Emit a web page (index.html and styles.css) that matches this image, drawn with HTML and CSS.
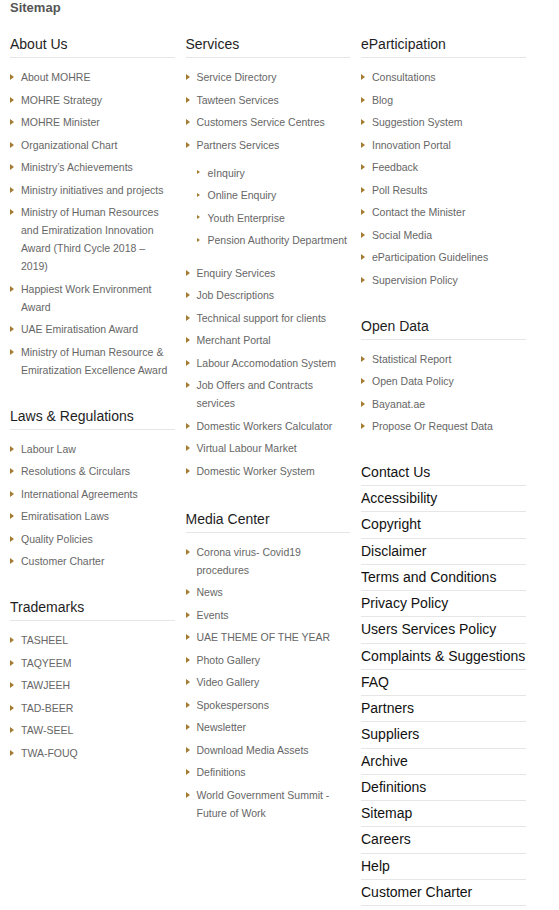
FILE: index.html
```html
<!DOCTYPE html>
<html lang="en">
<head>
<meta charset="utf-8">
<title>Sitemap</title>
<link rel="stylesheet" href="styles.css">
</head>
<body>
<h1 class="page-title">Sitemap</h1>
<div class="sitemap">
  <div class="col">
    <section class="section">
      <h2 class="section-title">About Us</h2>
      <ul class="links">
        <li><a href="#">About MOHRE</a></li>
        <li><a href="#">MOHRE Strategy</a></li>
        <li><a href="#">MOHRE Minister</a></li>
        <li><a href="#">Organizational Chart</a></li>
        <li><a href="#">Ministry’s Achievements</a></li>
        <li><a href="#">Ministry initiatives and projects</a></li>
        <li><a href="#">Ministry of Human Resources and Emiratization Innovation Award (Third Cycle 2018 – 2019)</a></li>
        <li><a href="#">Happiest Work Environment Award</a></li>
        <li><a href="#">UAE Emiratisation Award</a></li>
        <li><a href="#">Ministry of Human Resource &amp; Emiratization Excellence Award</a></li>
      </ul>
    </section>
    <section class="section">
      <h2 class="section-title">Laws &amp; Regulations</h2>
      <ul class="links">
        <li><a href="#">Labour Law</a></li>
        <li><a href="#">Resolutions &amp; Circulars</a></li>
        <li><a href="#">International Agreements</a></li>
        <li><a href="#">Emiratisation Laws</a></li>
        <li><a href="#">Quality Policies</a></li>
        <li><a href="#">Customer Charter</a></li>
      </ul>
    </section>
    <section class="section">
      <h2 class="section-title">Trademarks</h2>
      <ul class="links">
        <li><a href="#">TASHEEL</a></li>
        <li><a href="#">TAQYEEM</a></li>
        <li><a href="#">TAWJEEH</a></li>
        <li><a href="#">TAD-BEER</a></li>
        <li><a href="#">TAW-SEEL</a></li>
        <li><a href="#">TWA-FOUQ</a></li>
      </ul>
    </section>
  </div>

  <div class="col">
    <section class="section">
      <h2 class="section-title">Services</h2>
      <ul class="links">
        <li><a href="#">Service Directory</a></li>
        <li><a href="#">Tawteen Services</a></li>
        <li><a href="#">Customers Service Centres</a></li>
        <li><a href="#">Partners Services</a>
          <ul class="links sub-links">
            <li><a href="#">eInquiry</a></li>
            <li><a href="#">Online Enquiry</a></li>
            <li><a href="#">Youth Enterprise</a></li>
            <li><a href="#">Pension Authority Department</a></li>
          </ul>
        </li>
        <li><a href="#">Enquiry Services</a></li>
        <li><a href="#">Job Descriptions</a></li>
        <li><a href="#">Technical support for clients</a></li>
        <li><a href="#">Merchant Portal</a></li>
        <li><a href="#">Labour Accomodation System</a></li>
        <li><a href="#">Job Offers and Contracts services</a></li>
        <li><a href="#">Domestic Workers Calculator</a></li>
        <li><a href="#">Virtual Labour Market</a></li>
        <li><a href="#">Domestic Worker System</a></li>
      </ul>
    </section>
    <section class="section section--spaced">
      <h2 class="section-title">Media Center</h2>
      <ul class="links">
        <li><a href="#">Corona virus- Covid19 procedures</a></li>
        <li><a href="#">News</a></li>
        <li><a href="#">Events</a></li>
        <li><a href="#">UAE THEME OF THE YEAR</a></li>
        <li><a href="#">Photo Gallery</a></li>
        <li><a href="#">Video Gallery</a></li>
        <li><a href="#">Spokespersons</a></li>
        <li><a href="#">Newsletter</a></li>
        <li><a href="#">Download Media Assets</a></li>
        <li><a href="#">Definitions</a></li>
        <li><a href="#">World Government Summit - Future of Work</a></li>
      </ul>
    </section>
  </div>

  <div class="col">
    <section class="section">
      <h2 class="section-title">eParticipation</h2>
      <ul class="links">
        <li><a href="#">Consultations</a></li>
        <li><a href="#">Blog</a></li>
        <li><a href="#">Suggestion System</a></li>
        <li><a href="#">Innovation Portal</a></li>
        <li><a href="#">Feedback</a></li>
        <li><a href="#">Poll Results</a></li>
        <li><a href="#">Contact the Minister</a></li>
        <li><a href="#">Social Media</a></li>
        <li><a href="#">eParticipation Guidelines</a></li>
        <li><a href="#">Supervision Policy</a></li>
      </ul>
    </section>
    <section class="section">
      <h2 class="section-title">Open Data</h2>
      <ul class="links">
        <li><a href="#">Statistical Report</a></li>
        <li><a href="#">Open Data Policy</a></li>
        <li><a href="#">Bayanat.ae</a></li>
        <li><a href="#">Propose Or Request Data</a></li>
      </ul>
    </section>
    <ul class="footer-links">
      <li><a href="#">Contact Us</a></li>
      <li><a href="#">Accessibility</a></li>
      <li><a href="#">Copyright</a></li>
      <li><a href="#">Disclaimer</a></li>
      <li><a href="#">Terms and Conditions</a></li>
      <li><a href="#">Privacy Policy</a></li>
      <li><a href="#">Users Services Policy</a></li>
      <li><a href="#">Complaints &amp; Suggestions</a></li>
      <li><a href="#">FAQ</a></li>
      <li><a href="#">Partners</a></li>
      <li><a href="#">Suppliers</a></li>
      <li><a href="#">Archive</a></li>
      <li><a href="#">Definitions</a></li>
      <li><a href="#">Sitemap</a></li>
      <li><a href="#">Careers</a></li>
      <li><a href="#">Help</a></li>
      <li><a href="#">Customer Charter</a></li>
    </ul>
  </div>
</div>
</body>
</html>
```

FILE: styles.css
```css
* {
  box-sizing: border-box;
}

body {
  margin: 0;
  background: #ffffff;
  font-family: "Liberation Sans", Arial, sans-serif;
  color: #222222;
}

.page-title {
  margin: 0;
  padding-left: 10px;
  font-size: 13px;
  line-height: 16px;
  font-weight: 700;
  color: #555555;
}

.sitemap {
  display: grid;
  grid-template-columns: repeat(3, 164.5px);
  column-gap: 11px;
  align-items: start;
  margin-top: 18px;
  padding: 0 10px;
}

.section + .section {
  margin-top: 24.75px;
}

.section + .section--spaced {
  margin-top: 26.75px;
}

.section-title {
  margin: 0;
  padding-bottom: 3px;
  border-bottom: 1px solid #e6e6e6;
  font-size: 14px;
  line-height: 20px;
  font-weight: 400;
  color: #1e1e1e;
}

.links {
  list-style: none;
  margin: 0;
  padding: 7.75px 0 0;
}

.links li {
  display: grid;
  grid-template-columns: 11px 1fr;
  padding: 2.25px 0;
  font-size: 10.5px;
  line-height: 18px;
}

.links li::before {
  content: "";
  width: 0;
  height: 0;
  margin-top: 6px;
  border-left: 4px solid #a57c33;
  border-top: 3.5px solid transparent;
  border-bottom: 3.5px solid transparent;
}

.links a {
  color: #666666;
  text-decoration: none;
}

.sub-links {
  grid-column: 1 / -1;
  padding: 8px 0 7.5px 11px;
}

.sub-links li::before {
  margin-top: 6.5px;
  border-left-width: 3px;
  border-top-width: 2.5px;
  border-bottom-width: 2.5px;
}

.footer-links {
  list-style: none;
  margin: 22.5px 0 0;
  padding: 0;
}

.footer-links li {
  padding: 3px 0 4.25px;
  border-bottom: 1px solid #e6e6e6;
  font-size: 14px;
  line-height: 18px;
  white-space: nowrap;
  overflow: hidden;
}

.footer-links a {
  color: #111111;
  text-decoration: none;
}
```
